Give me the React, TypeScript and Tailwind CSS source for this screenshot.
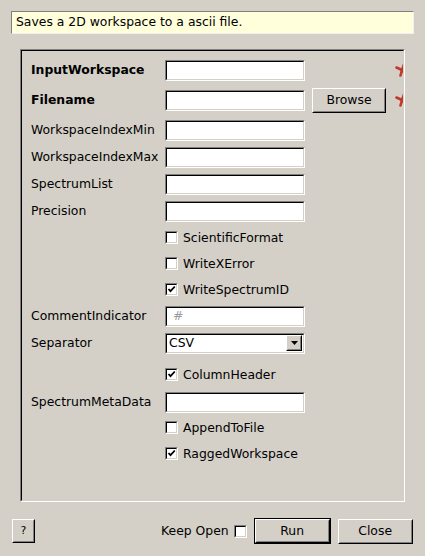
import React from "react";

const FONT = "font-['DejaVu_Sans','Liberation_Sans',sans-serif]";

const Sunken: React.FC<{ className?: string; children?: React.ReactNode }> = ({ className = "", children }) => (
  <div className={`border border-t-[#808080] border-l-[#808080] border-r-white border-b-white ${className}`}>
    <div className="w-full h-full border border-t-black border-l-black border-r-[#d4d0c8] border-b-[#d4d0c8] bg-white flex items-center overflow-hidden">
      {children}
    </div>
  </div>
);

const Raised: React.FC<{ className?: string; children?: React.ReactNode }> = ({ className = "", children }) => (
  <div className={`border border-t-white border-l-white border-r-black border-b-black bg-[#d4d0c8] ${className}`}>
    <div className="w-full h-full border border-t-[#d4d0c8] border-l-[#d4d0c8] border-r-[#808080] border-b-[#808080] flex items-center justify-center">
      {children}
    </div>
  </div>
);

const Check: React.FC<{ checked?: boolean }> = ({ checked }) => (
  <Sunken className="w-[13px] h-[13px] shrink-0">
    {checked && (
      <svg width="9" height="9" viewBox="0 0 9 9" className="block">
        <path d="M1.5 4 L3.5 6.2 L7.8 1.5" stroke="#000" strokeWidth="1.8" fill="none" />
      </svg>
    )}
  </Sunken>
);

const Star: React.FC<{ ml: string }> = ({ ml }) => (
  <svg width="14" height="14" viewBox="0 0 14 14" className={`shrink-0 ${ml}`}>
    <g stroke="#c0392b" strokeWidth="2.6" strokeLinecap="round">
      <line x1="7" y1="7" x2="1.5" y2="4.5" />
      <line x1="7" y1="7" x2="5.5" y2="12.5" />
      <line x1="7" y1="7" x2="9" y2="1.5" />
      <line x1="7" y1="7" x2="12.5" y2="5" />
      <line x1="7" y1="7" x2="11" y2="12" />
    </g>
  </svg>
);

type Row = {
  label?: string;
  bold?: boolean;
  kind: "input" | "check" | "combo";
  mt: string;
  checked?: boolean;
  text?: string;
  placeholder?: string;
  browse?: boolean;
  star?: boolean;
};

const rows: Row[] = [
  { label: "InputWorkspace", bold: true, kind: "input", mt: "mt-0", star: true },
  { label: "Filename", bold: true, kind: "input", mt: "mt-[4px]", browse: true, star: true },
  { label: "WorkspaceIndexMin", kind: "input", mt: "mt-[4px]" },
  { label: "WorkspaceIndexMax", kind: "input", mt: "mt-[1px]" },
  { label: "SpectrumList", kind: "input", mt: "mt-[1px]" },
  { label: "Precision", kind: "input", mt: "mt-[1px]" },
  { kind: "check", text: "ScientificFormat", mt: "mt-[1px]" },
  { kind: "check", text: "WriteXError", mt: "mt-0" },
  { kind: "check", text: "WriteSpectrumID", mt: "mt-0", checked: true },
  { label: "CommentIndicator", kind: "input", mt: "mt-0", placeholder: "#" },
  { label: "Separator", kind: "combo", mt: "mt-[1px]" },
  { kind: "check", text: "ColumnHeader", mt: "mt-[6px]", checked: true },
  { label: "SpectrumMetaData", kind: "input", mt: "mt-[1px]" },
  { kind: "check", text: "AppendToFile", mt: "mt-0" },
  { kind: "check", text: "RaggedWorkspace", mt: "mt-0", checked: true },
];

export default function App() {
  return (
    <div className={`w-[425px] h-[556px] bg-[#d4d0c8] text-[12.4px] text-black overflow-hidden ${FONT}`}>
      {/* description */}
      <div className="pt-[11px] pl-[11px]">
        <div className="w-[403px] h-[23px] bg-[#ffffdc] border border-t-[#808080] border-l-[#808080] border-r-[#f0f0f0] border-b-[#f0f0f0] flex items-center pl-[4px]">
          Saves a 2D workspace to a ascii file.
        </div>
      </div>

      {/* properties group */}
      <div className="ml-[20px] mt-[15px] w-[385px] h-[453px] border border-t-[#808080] border-l-[#808080] border-r-white border-b-white">
        <div className="w-full h-full border border-t-black border-l-black border-r-[#d4d0c8] border-b-[#d4d0c8] overflow-hidden pl-[9px] pt-[6px] flex flex-col">
          {rows.map((r, i) => (
            <div key={i} className={`h-[26px] flex items-center shrink-0 ${r.mt}`}>
              <div className={`w-[134px] shrink-0 whitespace-nowrap ${r.bold ? "font-bold" : ""}`}>{r.label}</div>
              {r.kind === "input" && (
                <Sunken className="w-[140px] h-[21px] shrink-0">
                  {r.placeholder && <span className="pl-[6px] text-[#9a9a9a]">{r.placeholder}</span>}
                </Sunken>
              )}
              {r.kind === "combo" && (
                <Sunken className="w-[140px] h-[21px] shrink-0">
                  <div className="flex-1 pl-[2px]">CSV</div>
                  <Raised className="w-[16px] h-[16px] mr-[1px]">
                    <svg width="7" height="4" viewBox="0 0 7 4">
                      <path d="M0 0 H7 L3.5 4 Z" fill="#000" />
                    </svg>
                  </Raised>
                </Sunken>
              )}
              {r.kind === "check" && (
                <div className="flex items-center gap-[5px]">
                  <Check checked={r.checked} />
                  <span className="whitespace-nowrap">{r.text}</span>
                </div>
              )}
              {r.browse && (
                <Raised className="ml-[7px] w-[74px] h-[25px] shrink-0">Browse</Raised>
              )}
              {r.star && <Star ml={r.browse ? "ml-[9px]" : "ml-[90px]"} />}
            </div>
          ))}
        </div>
      </div>

      {/* bottom buttons */}
      <div className="mt-[16px] h-[26px] flex items-center">
        <Raised className="ml-[12px] w-[23px] h-[24px] text-[11px]">?</Raised>
        <span className="ml-[126px] whitespace-nowrap">Keep Open</span>
        <div className="ml-[5px]">
          <Check />
        </div>
        <div className="ml-[7px] border border-black">
          <Raised className="w-[75px] h-[24px]">Run</Raised>
        </div>
        <Raised className="ml-[7px] w-[75px] h-[25px]">Close</Raised>
      </div>
    </div>
  );
}
